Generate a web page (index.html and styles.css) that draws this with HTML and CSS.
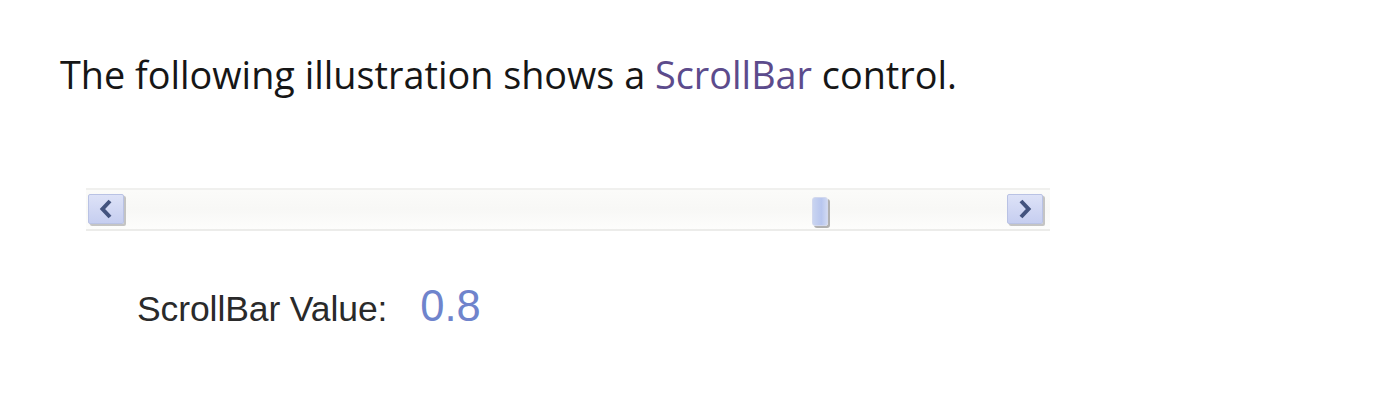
FILE: index.html
```html
<!DOCTYPE html>
<html>
<head>
<meta charset="utf-8">
<link rel="stylesheet" href="styles.css">
</head>
<body>
<p class="intro">The following illustration shows a <a class="link" href="#">ScrollBar</a> control.</p>
<div class="figure">
  <div class="scrollbar">
    <div class="btn btn-left">
      <svg width="18" height="22" viewBox="0 0 18 22"><path d="M13 3 L5.5 11 L13 19" fill="none" stroke="#43537e" stroke-width="4" stroke-linejoin="miter"/></svg>
    </div>
    <div class="track">
      <div class="thumb"></div>
    </div>
    <div class="btn btn-right">
      <svg width="18" height="22" viewBox="0 0 18 22"><path d="M5 3 L12.5 11 L5 19" fill="none" stroke="#43537e" stroke-width="4" stroke-linejoin="miter"/></svg>
    </div>
  </div>
  <div class="value-row">
    <span class="label">ScrollBar Value:</span>
    <span class="value">0.8</span>
  </div>
</div>
</body>
</html>
```
FILE: styles.css
```css
html, body {
  margin: 0;
  padding: 0;
  background: #ffffff;
}
body {
  padding: 49px 0 0 60px;
}
.intro {
  margin: 0;
  font-family: "Open Sans", "Noto Sans", sans-serif;
  font-size: 37.8px;
  line-height: 52px;
  color: #161616;
}
.link {
  color: #5c4b8c;
  text-decoration: none;
}
.figure {
  margin-top: 87px;
  margin-left: 26px;
  width: 964px;
}
.scrollbar {
  display: flex;
  align-items: stretch;
  height: 43px;
  border-top: 2px solid #f0f0ee;
  border-bottom: 2px solid #ececea;
  background: linear-gradient(#fbfbf9, #f8f8f6 50%, #fdfdfc);
  box-sizing: border-box;
  padding: 4px 7px 3px 2px;
}
.btn {
  width: 36px;
  flex: none;
  display: flex;
  align-items: center;
  justify-content: center;
  background: linear-gradient(#dde2f7, #c6cef0);
  border: 1px solid #b9c2e4;
  border-radius: 2px;
  box-shadow: 2px 2px 0 #c4c4c4, 1px 1px 0 #e8e8e8;
  box-sizing: border-box;
  margin-bottom: 2px;
}
.track {
  flex: 1;
  display: flex;
  padding-left: 688px;
}
.thumb {
  width: 16px;
  margin-top: 3px;
  background: linear-gradient(90deg, #c9d4f0, #b8c6ee 60%, #cfd8f2);
  border: 1px solid #d2d8ee;
  border-radius: 3px;
  box-shadow: 2px 2px 0 #b0b0b0;
  box-sizing: border-box;
}
.value-row {
  display: flex;
  align-items: baseline;
  padding-left: 51px;
  margin-top: 51px;
}
.label {
  font-family: "Liberation Sans", Arial, sans-serif;
  font-size: 35.5px;
  color: #2a2a2a;
  letter-spacing: -0.1px;
}
.value {
  font-family: "Liberation Sans", Arial, sans-serif;
  font-size: 43.5px;
  color: #6f84cc;
  margin-left: 33px;
}
```
